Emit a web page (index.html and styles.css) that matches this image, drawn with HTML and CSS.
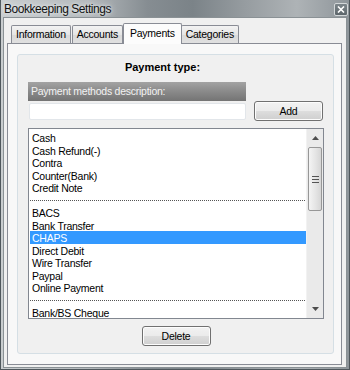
FILE: index.html
```html
<!DOCTYPE html>
<html lang="en">
<head>
    <meta charset="UTF-8">
    <meta name="viewport" content="width=device-width, initial-scale=1.0">
    <title>Bookkeeping Settings</title>
    <link rel="stylesheet" href="styles.css">
</head>
<body>
    <div class="window">
        <div class="titlebar">
            <span class="title">Bookkeeping Settings</span>
            <span class="close">
                <svg width="8" height="7" viewBox="0 0 8 7"><path d="M1 0.5 L7 6.5 M7 0.5 L1 6.5" stroke="#fff" stroke-width="1.6"/></svg>
            </span>
        </div>
        <div class="client">
            <div class="tabs">
                <div class="tab">Information</div>
                <div class="tab">Accounts</div>
                <div class="tab active">Payments</div>
                <div class="tab">Categories</div>
            </div>
            <div class="panel">
                <div class="group">
                    <div class="heading">Payment type:</div>
                    <div class="desc-row">
                        <div class="desc">
                            <div class="desc-label">Payment methods description:</div>
                            <div class="desc-input"></div>
                        </div>
                        <button class="btn add">Add</button>
                    </div>
                    <div class="listbox">
                        <ul class="items">
                            <li>Cash</li>
                            <li>Cash Refund(-)</li>
                            <li>Contra</li>
                            <li>Counter(Bank)</li>
                            <li>Credit Note</li>
                            <li class="sep"></li>
                            <li>BACS</li>
                            <li>Bank Transfer</li>
                            <li class="selected">CHAPS</li>
                            <li>Direct Debit</li>
                            <li>Wire Transfer</li>
                            <li>Paypal</li>
                            <li>Online Payment</li>
                            <li class="sep"></li>
                            <li>Bank/BS Cheque</li>
                        </ul>
                        <div class="scrollbar">
                            <div class="arrow">
                                <svg width="7" height="4" viewBox="0 0 7 4"><path d="M0 4 L3.5 0 L7 4 Z" fill="#4d4d4d"/></svg>
                            </div>
                            <div class="track">
                                <div class="thumb">
                                    <span class="grip"></span>
                                </div>
                            </div>
                            <div class="arrow">
                                <svg width="7" height="4" viewBox="0 0 7 4"><path d="M0 0 L7 0 L3.5 4 Z" fill="#4d4d4d"/></svg>
                            </div>
                        </div>
                    </div>
                    <div class="actions">
                        <button class="btn delete">Delete</button>
                    </div>
                </div>
            </div>
        </div>
    </div>
</body>
</html>
```

FILE: styles.css
```css
body {
    margin: 0;
    font-family: "Liberation Sans", Arial, sans-serif;
    font-size: 10.5px;
    letter-spacing: -0.25px;
    color: #000;
}

.window {
    width: 350px;
    height: 370px;
    box-sizing: border-box;
    display: flex;
    flex-direction: column;
    background: linear-gradient(to right, #c9cdcf 0%, #b4b9bc 25%, #868d92 42%, #7b8388 55%, #969ca0 70%, #aeb3b6 85%, #8e959a 100%);
    border: 1px solid #4f575c;
    border-top: none;
}

.titlebar {
    height: 18px;
    display: flex;
    align-items: center;
    justify-content: space-between;
    padding: 0 1px 0 3px;
}

.title {
    font-size: 12px;
    letter-spacing: -0.45px;
    color: #111;
    text-shadow: 0 0 6px #e8ecee, 0 0 3px #e8ecee;
}

.close {
    width: 14px;
    height: 13px;
    margin-top: 2px;
    display: flex;
    align-items: center;
    justify-content: center;
    background: linear-gradient(#7d868b, #5d666b);
    border: 1px solid #d3d7d9;
    border-radius: 2px;
    box-sizing: border-box;
}

.client {
    flex: 1;
    margin: 0 2px 1px 2px;
    padding: 5px 4px 2px 3px;
    background: #f0f0f0;
    border: 1px solid #8a9195;
    display: flex;
    flex-direction: column;
}

.tabs {
    display: flex;
    align-items: flex-end;
    height: 20px;
    padding-left: 4px;
    position: relative;
    z-index: 1;
}

.tab {
    height: 18px;
    line-height: 17px;
    padding: 0 4px;
    margin-right: 1px;
    border: 1px solid #898c95;
    border-bottom: none;
    border-radius: 2px 2px 0 0;
    background: linear-gradient(#f3f3f3, #e5e5e5 50%, #d9d9d9 51%, #e0e0e0);
    box-sizing: border-box;
}

.tab.active {
    height: 21px;
    line-height: 18px;
    margin: 0 -1px -1px -1px;
    padding: 0 6px;
    background: #fcfcfc;
    position: relative;
}

.panel {
    flex: 1;
    background: #f8f8f8;
    border: 1px solid #898c95;
    padding: 10px 7px 10px 9px;
    display: flex;
}

.group {
    flex: 1;
    border: 1px solid #d5dfe5;
    border-radius: 3px;
    background: #f0f0f0;
    padding: 6px 9px 7px 10px;
    display: flex;
    flex-direction: column;
}

.heading {
    font-size: 11px;
    letter-spacing: 0;
    font-weight: bold;
    text-align: center;
    line-height: 13px;
    padding-right: 27px;
}

.desc-row {
    display: flex;
    align-items: flex-end;
    margin-top: 8px;
}

.desc {
    width: 218px;
}

.desc-label {
    height: 19px;
    line-height: 18px;
    padding-left: 3px;
    color: #f2f2f2;
    background: linear-gradient(#a3a3a3, #8c8c8c 45%, #747474);
}

.desc-input {
    height: 17px;
    margin: 2px 0 1px 1px;
    background: #fff;
    border: 1px solid #e2e6ea;
    border-radius: 2px;
    box-sizing: border-box;
}

.btn {
    font-family: "Liberation Sans", Arial, sans-serif;
    font-size: 10.5px;
    letter-spacing: -0.25px;
    color: #000;
    height: 20px;
    padding: 0;
    border: 1px solid #707070;
    border-radius: 3px;
    background: linear-gradient(#f2f2f2, #ebebeb 48%, #dddddd 52%, #cfcfcf);
    box-shadow: inset 0 0 0 1px #fcfcfc;
}

.add {
    width: 69px;
    margin-left: 8px;
}

.listbox {
    margin-top: 7px;
    height: 191px;
    box-sizing: border-box;
    border: 1px solid #828790;
    background: #fff;
    display: flex;
    overflow: hidden;
}

.items {
    flex: 1;
    list-style: none;
    margin: 0;
    padding: 2px 0 0 1px;
}

.items li {
    height: 12.5px;
    line-height: 14px;
    padding-left: 2px;
    white-space: nowrap;
}

.items li.selected {
    background: #3399ff;
    color: #fff;
}

.items li.sep {
    background-image: linear-gradient(to right, #555 50%, transparent 50%);
    background-size: 2px 1px;
    background-repeat: repeat-x;
    background-position: 2px 6px;
}

.scrollbar {
    width: 16px;
    display: flex;
    flex-direction: column;
    background: #eaeaea;
    border-left: 1px solid #f2f2f2;
}

.arrow {
    height: 18px;
    display: flex;
    align-items: center;
    justify-content: center;
}

.track {
    flex: 1;
    padding: 0 1px;
}

.thumb {
    height: 62px;
    border: 1px solid #979797;
    border-radius: 2px;
    background: linear-gradient(to right, #f4f4f4, #e6e6e6 50%, #d6d6d6);
    display: flex;
    align-items: center;
    justify-content: center;
}

.grip {
    width: 7px;
    height: 7px;
    background: linear-gradient(#545454 0 1px, transparent 1px 3px, #545454 3px 4px, transparent 4px 6px, #545454 6px 7px);
}

.actions {
    display: flex;
    justify-content: center;
    margin-top: 7px;
}

.delete {
    width: 69px;
    height: 20px;
}
```
